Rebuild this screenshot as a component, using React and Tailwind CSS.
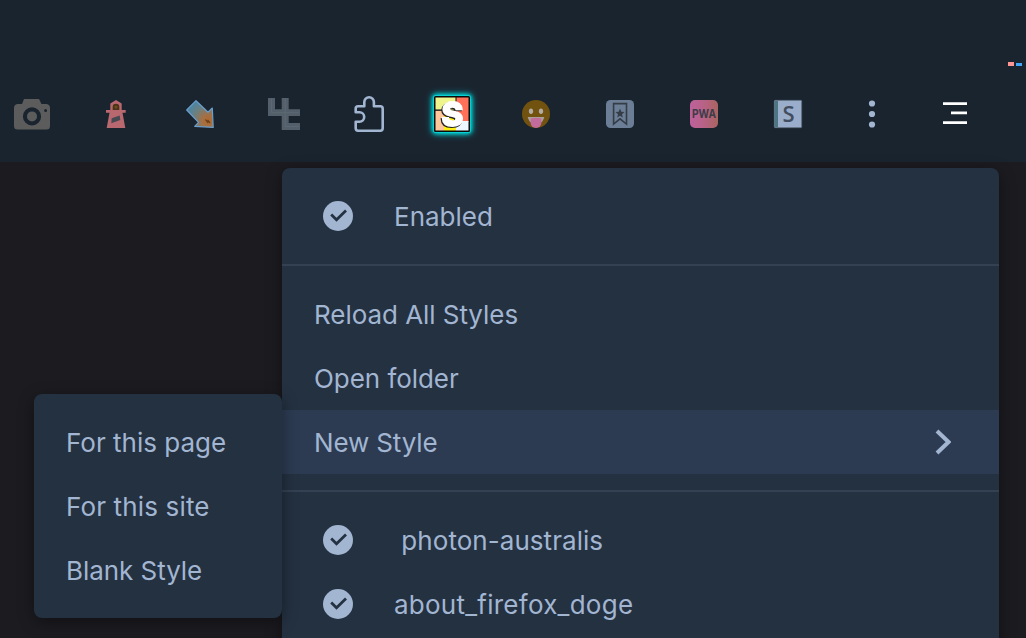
function Icon({ children, className = "" }) {
  return (
    <div className="flex w-[84px] shrink-0 items-center justify-center">
      <svg className={`size-14 overflow-visible ${className}`} viewBox="-28 -28 56 56">
        {children}
      </svg>
    </div>
  );
}

function Toolbar() {
  return (
    <div className="-ml-[10px] mt-[86px] flex h-14">
      <Icon>
        <path
          fillRule="evenodd"
          fill="#5c5c5c"
          d="M-8 -15H7L9.5 -10H14.500Q18 -9.500 18 -6V12Q18 15.500 14.500 15.500H-14.500Q-18 15.500 -18 12V-6Q-18 -9.500 -14.500 -10H-10ZM0 -6.700A9.100 9.100 0 1 0 0 11.500A9.100 9.100 0 1 0 0 -6.700ZM13.600 -5A1.500 1.500 0 1 0 13.600 -2A1.500 1.500 0 1 0 13.600 -5Z"
        />
        <circle cy="2.400" r="5" fill="#5c5c5c" />
      </Icon>
      <Icon>
        <path fill="#b8686e" d="M0 -14L5.700 -10.500V-4H9.700V-1.200H6.500L9.300 14H-9.300L-6.500 -1.200H-10V-4H-5.700V-10.500Z" />
        <path fill="#4a3319" d="M-3.300 -4V-7A3.300 3.300 0 0 1 3.300 -7V-4Z" />
        <circle cy="-7" r="1.500" fill="#68501b" />
        <path fill="#474952" d="M-4.300 4.300L3.700 1.500L4.300 6L-4.700 9.300Z" />
      </Icon>
      <Icon>
        <defs>
          <radialGradient id="arrow" gradientUnits="userSpaceOnUse" cx="8" cy="7" r="24">
            <stop offset="0" stopColor="#b0682a" />
            <stop offset="0.250" stopColor="#a37046" />
            <stop offset="0.600" stopColor="#6c8080" />
            <stop offset="1" stopColor="#4686a8" />
          </radialGradient>
        </defs>
        <path
          fill="url(#arrow)"
          stroke="#6b9fcd"
          strokeWidth="1.200"
          strokeLinejoin="round"
          d="M-4 -13.300L-13.300 -4L-1.500 8.300L-5.300 12.300L13.200 13.400L12.300 -6L8 -1.800Z"
        />
        <path d="M5.500 5.500L8 9M7.500 6L10 9" stroke="#633c18" strokeWidth="1.200" />
      </Icon>
      <Icon>
        <path fill="#535f6a" d="M-16 -16H-9V-4.700H-2.300V-16H4.700V-4.700H16V2H4.700V9H16V16H-2.300V2H-16Z" />
        <path stroke="#626d77" strokeWidth="0.700" fill="none" d="M-12.500 -15V-1.300H15M1.200 -15V12.500H15" />
      </Icon>
      <Icon>
        <path
          fill="none"
          stroke="#a2b5d1"
          strokeWidth="2.600"
          strokeLinejoin="round"
          d="M-12.300 -1.700V-5.500Q-12.300 -7.700 -10 -7.700H-3.700V-12A4.800 4.800 0 0 1 5.900 -12V-7.700H12.300Q14.700 -7.700 14.700 -5.300V14.300Q14.700 16.700 12.300 16.700H-10Q-12.300 16.700 -12.300 14.300V7.700H-8.500A4.700 4.700 0 0 0 -8.500 -1.700Z"
        />
      </Icon>
      <Icon className="filter-[drop-shadow(0_0_2px_#00e5e5)_drop-shadow(0_0_3px_#00c8cc)]">
        <rect x="-19" y="-19" width="38" height="38" rx="3" fill="#08cfd2" />
        <rect x="-18" y="-18" width="36" height="36" rx="1.500" fill="#0b0b0b" />
        <path fill="#eef58d" d="M-16.500 -16.500H3.500V-4.500H-16.500Z" />
        <path fill="#ff7259" d="M4.500 -16.500H16.500V8H4.500Z" />
        <path fill="#fdc69b" d="M-16.500 -3.200H-8V16.500H-16.500Z" />
        <path fill="#ffef12" d="M-8 -3.200H4V16.500H-8Z" />
        <path fill="#eef7ff" d="M4 7H16.500V16.500H4Z" />
        <g textAnchor="middle" fontFamily="Inter, sans-serif" fontWeight="800" fontSize="33">
          <text x="-0.700" y="12.600" fill="#222" stroke="#222" strokeWidth="2">
            S
          </text>
          <text x="0.300" y="12" fill="#fff" stroke="#fff" strokeWidth="1.800">
            S
          </text>
        </g>
      </Icon>
      <Icon>
        <circle r="14" fill="#71520f" />
        <ellipse cx="-5" cy="-2.700" rx="2.100" ry="2.700" fill="#b3aca5" />
        <ellipse cx="5" cy="-2.700" rx="2.100" ry="2.700" fill="#b3aca5" />
        <path d="M-8.300 3H8.300Q7 8.500 3 9.500H-3Q-7 8.500 -8.300 3Z" fill="#aaa09c" />
        <path d="M-5.300 4.500Q0 2.800 5.300 4.500V9A5.300 5 0 0 1 -5.300 9Z" fill="#c46b9d" />
      </Icon>
      <Icon>
        <rect x="-14" y="-14" width="28" height="28" rx="4.500" fill="#6b7e96" />
        <path fill="none" stroke="#353c46" strokeWidth="1.600" d="M-6.400 -10.400H6.500V10L0 4.800L-6.400 10Z" />
        <path
          fill="#353c46"
          d="M0 -5.500L1.300 -2.300L4.500 -2L2 0.200L2.800 3.400L0 1.700L-2.800 3.400L-2 0.200L-4.500 -2L-1.300 -2.300Z"
        />
      </Icon>
      <Icon>
        <defs>
          <linearGradient id="badge">
            <stop offset="0" stopColor="#bd619c" />
            <stop offset="0.450" stopColor="#b96289" />
            <stop offset="1" stopColor="#a9645f" />
          </linearGradient>
        </defs>
        <rect x="-14" y="-14" width="28" height="28" rx="5" fill="url(#badge)" />
        <text
          x="0"
          y="4"
          textAnchor="middle"
          textLength="24"
          lengthAdjust="spacingAndGlyphs"
          fontFamily="Inter, sans-serif"
          fontWeight="700"
          fontSize="12"
          fill="#3c3c48"
        >
          PWA
        </text>
      </Icon>
      <Icon>
        <rect x="-13.700" y="-13.700" width="27.400" height="27.400" rx="1" fill="#9aadca" stroke="#596675" strokeWidth="0.700" />
        <path fill="#4b7684" d="M-13.300 -13H-10V13H-13.300Z" />
        <text
          x="0.500"
          y="7.800"
          textAnchor="middle"
          fontFamily="Open Sans, sans-serif"
          fontWeight="600"
          fontSize="22"
          fill="#424e60"
        >
          S
        </text>
      </Icon>
      <Icon>
        <g fill="#a2b5d1">
          <circle cy="-10.500" r="3.100" />
          <circle r="3.100" />
          <circle cy="10.500" r="3.100" />
        </g>
      </Icon>
      <Icon>
        <path fill="#fff" d="M-13 -11.700H11V-9H-13ZM-5 -2.500H11V0.300H-5ZM-13 7.200H11V10H-13Z" />
      </Icon>
    </div>
  );
}

function Check() {
  return (
    <svg className="-mt-0.5 ml-[9px] mr-[41px] size-[30px] shrink-0" viewBox="-15 -15 30 30">
      <circle r="15" fill="#a2b5d1" />
      <path d="M-6.800 -1.500L-1.500 3.800L8 -5.500" fill="none" stroke="#243141" strokeWidth="2.700" />
    </svg>
  );
}

function Row({ children, className = "" }) {
  return <div className={`flex h-16 items-center whitespace-pre px-8 pt-0.5 ${className}`}>{children}</div>;
}

export default function App() {
  return (
    <div className="relative h-[638px] w-[1026px] overflow-hidden bg-[#1c1b20] font-['Inter',sans-serif] text-[26px] leading-8 text-[#a2b5d1]">
      <header className="flex h-[162px] bg-[#1a242f]">
        <Toolbar />
      </header>
      <div className="absolute left-[1008px] top-[62px] h-1 w-1.5 bg-[#ff9694]" />
      <div className="absolute left-[1016px] top-[63px] h-[3px] w-1.5 bg-[#42a5f5]" />

      <div className="absolute left-[282px] top-[168px] h-[480px] w-[717px] rounded-t-lg bg-[#243141] pt-4 shadow-[0_4px_16px_rgba(0,0,0,0.4)]">
        <Row>
          <Check />
          <span>Enabled</span>
        </Row>
        <div className="my-4 h-0.5 bg-[#334153]" />
        <Row className="tracking-[-0.05px]">Reload All Styles</Row>
        <Row className="tracking-[-0.05px]">Open folder</Row>
        <Row className="justify-between bg-[#2c3b52]">
          <span className="tracking-[-0.15px]">New Style</span>
          <svg className="-mt-0.5 mr-4 h-7 w-4" viewBox="0 0 16 28" fill="none">
            <path d="M2 3L13.500 14L2 25" stroke="#a2b5d1" strokeWidth="4" />
          </svg>
        </Row>
        <div className="my-4 h-0.5 bg-[#334153]" />
        <Row>
          <Check />
          <span className="tracking-[0.05px]"> photon-australis</span>
        </Row>
        <Row>
          <Check />
          <span className="tracking-[0.25px]">about_firefox_doge</span>
        </Row>
      </div>

      <div className="absolute left-[34px] top-[394px] w-[248px] rounded-lg bg-[#243141] py-4 shadow-[0_4px_16px_rgba(0,0,0,0.4)]">
        <Row>For this page</Row>
        <Row className="tracking-[0.15px]">For this site</Row>
        <Row className="tracking-[-0.05px]">Blank Style</Row>
      </div>
    </div>
  );
}
